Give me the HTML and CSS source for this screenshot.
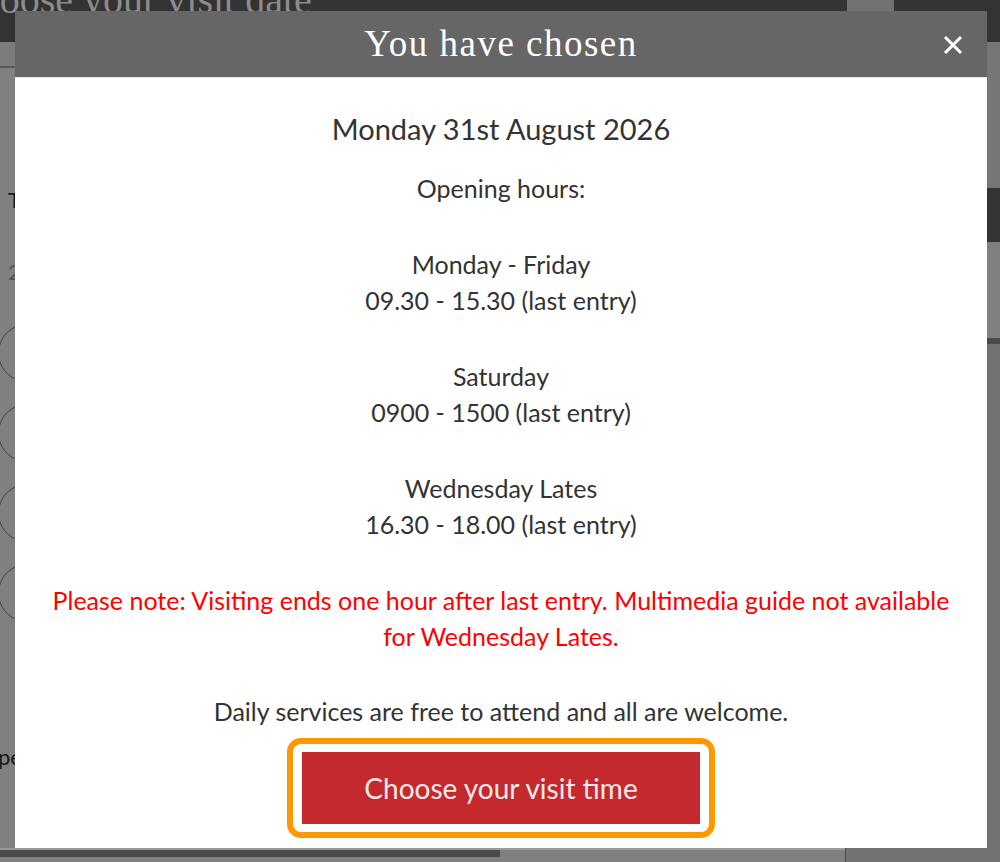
FILE: index.html
```html
<!DOCTYPE html>
<html lang="en">
<head>
<meta charset="utf-8">
<title>Choose your visit date</title>
<link rel="stylesheet" href="styles.css">
</head>
<body>
<div class="page">
  <header class="topbar">
    <h1 class="page-title">Choose your visit date</h1>
    <span class="topbtn"></span>
  </header>
  <div class="main">
    <div class="left">
      <div class="tabs"></div>
      <div class="cal">
        <div class="cal-head">T</div>
        <div class="cal-row">2</div>
        <div class="day">1</div>
        <div class="day">1</div>
        <div class="day">1</div>
        <div class="day">2</div>
        <div class="cal-foot">pe</div>
      </div>
      <div class="bottom-band"></div>
    </div>
    <div class="right">
      <div class="r1"></div>
      <div class="r2"></div>
      <div class="r3"></div>
      <div class="r4"></div>
    </div>
  </div>
</div>

<div class="modal" role="dialog" aria-labelledby="modal-title">
  <div class="modal-header">
    <h2 id="modal-title" class="modal-title">You have chosen</h2>
    <button class="close" aria-label="Close">
      <svg width="20" height="20" viewBox="0 0 20 20"><path d="M2 2 L18 18 M18 2 L2 18" stroke="#fff" stroke-width="3" fill="none"/></svg>
    </button>
  </div>
  <div class="modal-body">
    <h3 class="date">Monday 31st August 2026</h3>
    <p class="info">Opening hours:</p>
    <p class="info">Monday - Friday<br>09.30 - 15.30 (last entry)</p>
    <p class="info">Saturday<br>0900 - 1500 (last entry)</p>
    <p class="info">Wednesday Lates<br>16.30 - 18.00 (last entry)</p>
    <p class="info note">Please note: Visiting ends one hour after last entry. Multimedia guide not available for Wednesday Lates.</p>
    <p class="info last">Daily services are free to attend and all are welcome.</p>
    <span class="focus-ring"><button class="cta">Choose your visit time</button></span>
  </div>
</div>
</body>
</html>
```

FILE: styles.css
```css
html, body {
  margin: 0;
  padding: 0;
}
body {
  width: 1000px;
  height: 862px;
  overflow: hidden;
  background: #808080;
  font-family: Lato, "Open Sans", sans-serif;
}
.page {
  display: flex;
  flex-direction: column;
  height: 862px;
}
.topbar {
  height: 42px;
  background: #333;
  display: flex;
  align-items: flex-start;
  overflow: hidden;
  flex: none;
}
.page-title {
  margin: -22px 0 0 -47px;
  font-family: "Liberation Serif", serif;
  font-weight: normal;
  font-size: 40px;
  line-height: 44px;
  color: #8c8c8c;
  white-space: nowrap;
}
.topbtn {
  margin-left: auto;
  margin-right: 106px;
  width: 47px;
  height: 42px;
  background: #737171;
}
.main {
  flex: 1;
  display: flex;
}
.left {
  width: 845px;
  display: flex;
  flex-direction: column;
  background: #808080;
  border-right: 1px solid #4a4a4a;
}
.tabs {
  height: 24px;
  background: #7b7b7b;
  border-bottom: 2px solid #5a5a5a;
}
.cal {
  flex: 1;
  position: relative;
  padding-top: 256px;
  font-size: 22px;
  color: #1a1a1a;
}
.cal-head {
  position: absolute;
  left: 8px;
  top: 118px;
}
.cal-row {
  position: absolute;
  left: 8px;
  top: 190px;
  color: #555;
}
.day {
  width: 58px;
  height: 58px;
  box-sizing: border-box;
  margin: 0 0 22px -2px;
  border: 1px solid #444;
  border-radius: 50%;
  display: flex;
  align-items: center;
  justify-content: center;
  padding-left: 26px;
}
.cal-foot {
  position: absolute;
  left: -2px;
  top: 675px;
}
.bottom-band {
  height: 12px;
  border-top: 2px solid #9a9a9a;
  display: flex;
}
.bottom-band::before {
  content: "";
  width: 500px;
  height: 7px;
  background: #4a4a4a;
}
.right {
  flex: 1;
  display: flex;
  flex-direction: column;
  background: #737171;
}
.r1 { height: 146px; background: #767676; }
.r2 { height: 54px; background: #333; }
.r3 { height: 96px; background: #808080; }
.r4 { height: 6px; background: #4a4a4a; }

/* Modal */
.modal {
  position: fixed;
  left: 15px;
  top: 11px;
  width: 972px;
  height: 837px;
  background: #fff;
  display: flex;
  flex-direction: column;
}
.modal-header {
  height: 66px;
  background: #666;
  border-bottom: 1px solid #dfe2e6;
  display: flex;
  align-items: center;
  justify-content: center;
  position: relative;
  flex: none;
}
.modal-title {
  margin: 0;
  font-family: "Liberation Serif", serif;
  font-weight: normal;
  font-size: 37px;
  letter-spacing: 1.5px;
  color: #fff;
  line-height: 44px;
}
.close {
  position: absolute;
  right: 24px;
  top: 24px;
  width: 20px;
  height: 20px;
  padding: 0;
  border: 0;
  background: none;
  display: block;
}
.close svg {
  display: block;
}
.modal-body {
  display: flex;
  flex-direction: column;
  align-items: center;
  text-align: center;
  padding: 33px 30px 0;
  color: #333;
}
.date {
  margin: 0 0 23px;
  font-size: 29px;
  font-weight: normal;
  line-height: 36px;
}
.info {
  margin: 0 0 40px;
  font-size: 25px;
  line-height: 36px;
}
.info.note {
  color: #f00;
  margin-bottom: 39px;
}
.info.last {
  margin-bottom: 9px;
}
.focus-ring {
  display: block;
  border: 6px solid #ff9800;
  border-radius: 14px;
  padding: 8px 9px;
}
.cta {
  display: block;
  width: 398px;
  height: 72px;
  border: 0;
  background: #c4292e;
  color: #fbeaea;
  font-family: Lato, "Open Sans", sans-serif;
  font-size: 28px;
  padding: 0;
}
```
